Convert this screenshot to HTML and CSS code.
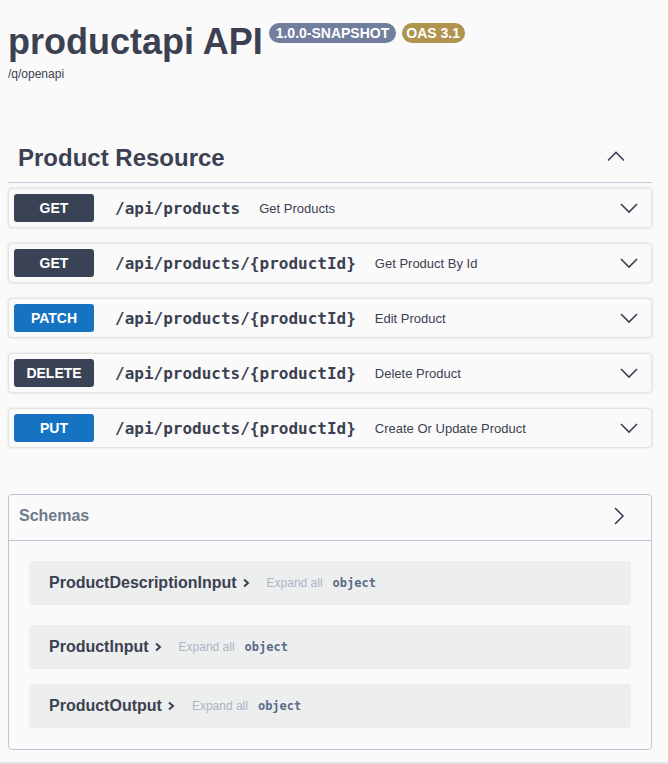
FILE: index.html
```html
<!DOCTYPE html>
<html lang="en">
<head>
<meta charset="utf-8">
<title>productapi API</title>
<link rel="stylesheet" href="styles.css">
</head>
<body>
<div class="page">
  <div class="info">
    <div class="title-row">
      <h1 class="title">productapi API</h1>
      <span class="badge badge-version">1.0.0-SNAPSHOT</span>
      <span class="badge badge-oas">OAS 3.1</span>
    </div>
    <div class="url">/q/openapi</div>
  </div>

  <section class="tag-section">
    <div class="tag">
      <h3 class="tag-name">Product Resource</h3>
      <svg class="chev-up" width="18" height="12" viewBox="0 0 18 12"><polyline points="1,10.5 9,2.5 17,10.5" fill="none" stroke="#3b4151" stroke-width="1.6"/></svg>
    </div>

    <div class="opblock">
      <span class="method m-dark">GET</span>
      <span class="path">/api/products</span>
      <span class="summary">Get Products</span>
      <svg class="chev-down" width="18" height="12" viewBox="0 0 18 12"><polyline points="1,2 9,10 17,2" fill="none" stroke="#3b4151" stroke-width="1.6"/></svg>
    </div>
    <div class="opblock">
      <span class="method m-dark">GET</span>
      <span class="path">/api/products/{productId}</span>
      <span class="summary">Get Product By Id</span>
      <svg class="chev-down" width="18" height="12" viewBox="0 0 18 12"><polyline points="1,2 9,10 17,2" fill="none" stroke="#3b4151" stroke-width="1.6"/></svg>
    </div>
    <div class="opblock">
      <span class="method m-blue">PATCH</span>
      <span class="path">/api/products/{productId}</span>
      <span class="summary">Edit Product</span>
      <svg class="chev-down" width="18" height="12" viewBox="0 0 18 12"><polyline points="1,2 9,10 17,2" fill="none" stroke="#3b4151" stroke-width="1.6"/></svg>
    </div>
    <div class="opblock">
      <span class="method m-dark">DELETE</span>
      <span class="path">/api/products/{productId}</span>
      <span class="summary">Delete Product</span>
      <svg class="chev-down" width="18" height="12" viewBox="0 0 18 12"><polyline points="1,2 9,10 17,2" fill="none" stroke="#3b4151" stroke-width="1.6"/></svg>
    </div>
    <div class="opblock">
      <span class="method m-blue">PUT</span>
      <span class="path">/api/products/{productId}</span>
      <span class="summary">Create Or Update Product</span>
      <svg class="chev-down" width="18" height="12" viewBox="0 0 18 12"><polyline points="1,2 9,10 17,2" fill="none" stroke="#3b4151" stroke-width="1.6"/></svg>
    </div>
  </section>

  <section class="models">
    <div class="models-head">
      <span class="models-title">Schemas</span>
      <svg class="chev-right" width="12" height="18" viewBox="0 0 12 18"><polyline points="2,1 10,9 2,17" fill="none" stroke="#3b4151" stroke-width="1.6"/></svg>
    </div>
    <div class="models-body">
      <div class="model first">
        <span class="model-title">ProductDescriptionInput</span>
        <svg class="chev-small" width="8" height="10" viewBox="0 0 8 10"><polyline points="2,1.5 6,5 2,8.5" fill="none" stroke="#3b4151" stroke-width="2"/></svg>
        <span class="expand">Expand all</span>
        <span class="type">object</span>
      </div>
      <div class="model">
        <span class="model-title">ProductInput</span>
        <svg class="chev-small" width="8" height="10" viewBox="0 0 8 10"><polyline points="2,1.5 6,5 2,8.5" fill="none" stroke="#3b4151" stroke-width="2"/></svg>
        <span class="expand">Expand all</span>
        <span class="type">object</span>
      </div>
      <div class="model">
        <span class="model-title">ProductOutput</span>
        <svg class="chev-small" width="8" height="10" viewBox="0 0 8 10"><polyline points="2,1.5 6,5 2,8.5" fill="none" stroke="#3b4151" stroke-width="2"/></svg>
        <span class="expand">Expand all</span>
        <span class="type">object</span>
      </div>
    </div>
  </section>
</div>
<div class="footer-line"></div>
</body>
</html>
```

FILE: styles.css
```css
html, body {
  margin: 0;
  padding: 0;
  background: #fafafa;
  font-family: "Liberation Sans", Arial, sans-serif;
  color: #3b4151;
}

.page {
  padding: 21px 16px 0 8px;
}

.title-row {
  display: flex;
  align-items: flex-start;
}

.title {
  margin: 0;
  font-size: 36px;
  font-weight: bold;
  line-height: normal;
  color: #3b4151;
}

.badge {
  margin-top: 2px;
  height: 20px;
  line-height: 20px;
  padding: 0 7px;
  border-radius: 10px;
  font-size: 14px;
  font-weight: bold;
  color: #ffffff;
}

.badge-version {
  margin-left: 6px;
  background: #717e9d;
}

.badge-oas {
  margin-left: 6px;
  padding: 0 5px 0 4px;
  background: #b1954f;
}

.url {
  margin-top: 4px;
  font-size: 12px;
  line-height: normal;
  color: #3b4151;
}

.tag-section {
  margin-top: 52px;
}

.tag {
  display: flex;
  align-items: center;
  padding: 10px 0 10px 10px;
  border-bottom: 1px solid #bfc9d7;
  margin-bottom: 5px;
}

.tag-name {
  margin: 0;
  font-size: 24px;
  line-height: 29px;
  font-weight: bold;
  color: #3b4151;
  flex: 1;
}

.chev-up {
  margin-right: 27px;
  margin-top: -4px;
}

.opblock {
  display: flex;
  align-items: center;
  padding: 5px;
  margin-bottom: 15px;
  border: 1px solid #e4e4e4;
  border-radius: 4px;
  background: #fafafa;
  box-shadow: 0 0 3px rgba(0, 0, 0, 0.12);
}

.method {
  width: 80px;
  height: 28px;
  line-height: 28px;
  text-align: center;
  border-radius: 3px;
  font-size: 14px;
  font-weight: bold;
  color: #ffffff;
}

.m-dark { background: #3a4255; }
.m-blue { background: #1573c2; }

.path {
  margin-left: 21px;
  font-family: "DejaVu Sans Mono", "Liberation Mono", monospace;
  font-weight: bold;
  font-size: 16px;
  color: #3b4151;
}

.summary {
  margin-left: 19px;
  font-size: 13px;
  color: #3b4151;
  flex: 1;
}

.chev-down {
  margin-right: 8px;
}

.models {
  margin-top: 46px;
  border: 1px solid #bac6d6;
  border-radius: 4px;
}

.models-head {
  display: flex;
  align-items: center;
  height: 41px;
  padding: 0 0 4px 10px;
  border-bottom: 1px solid #bac6d6;
}

.models-title {
  flex: 1;
  font-size: 16px;
  font-weight: bold;
  color: #6e7a8d;
}

.chev-right {
  margin-right: 26px;
}

.models-body {
  padding: 20px 20px 21px;
}

.model {
  display: flex;
  align-items: center;
  height: 44px;
  padding-left: 20px;
  margin-bottom: 15px;
  border-radius: 4px;
  background: #edeeee;
}

.model.first {
  margin-bottom: 20px;
}

.model:last-child {
  margin-bottom: 0;
}

.model-title {
  font-size: 16px;
  font-weight: bold;
  color: #3b4151;
}

.chev-small {
  margin-left: 5px;
}

.expand {
  margin-left: 17px;
  font-size: 12px;
  color: #aab6c4;
}

.type {
  margin-left: 10px;
  font-family: "DejaVu Sans Mono", "Liberation Mono", monospace;
  font-weight: bold;
  font-size: 12px;
  color: #5a6b8c;
}

.footer-line {
  margin-top: 12px;
  height: 20px;
  border-top: 2px solid #e4e4e4;
}
```
